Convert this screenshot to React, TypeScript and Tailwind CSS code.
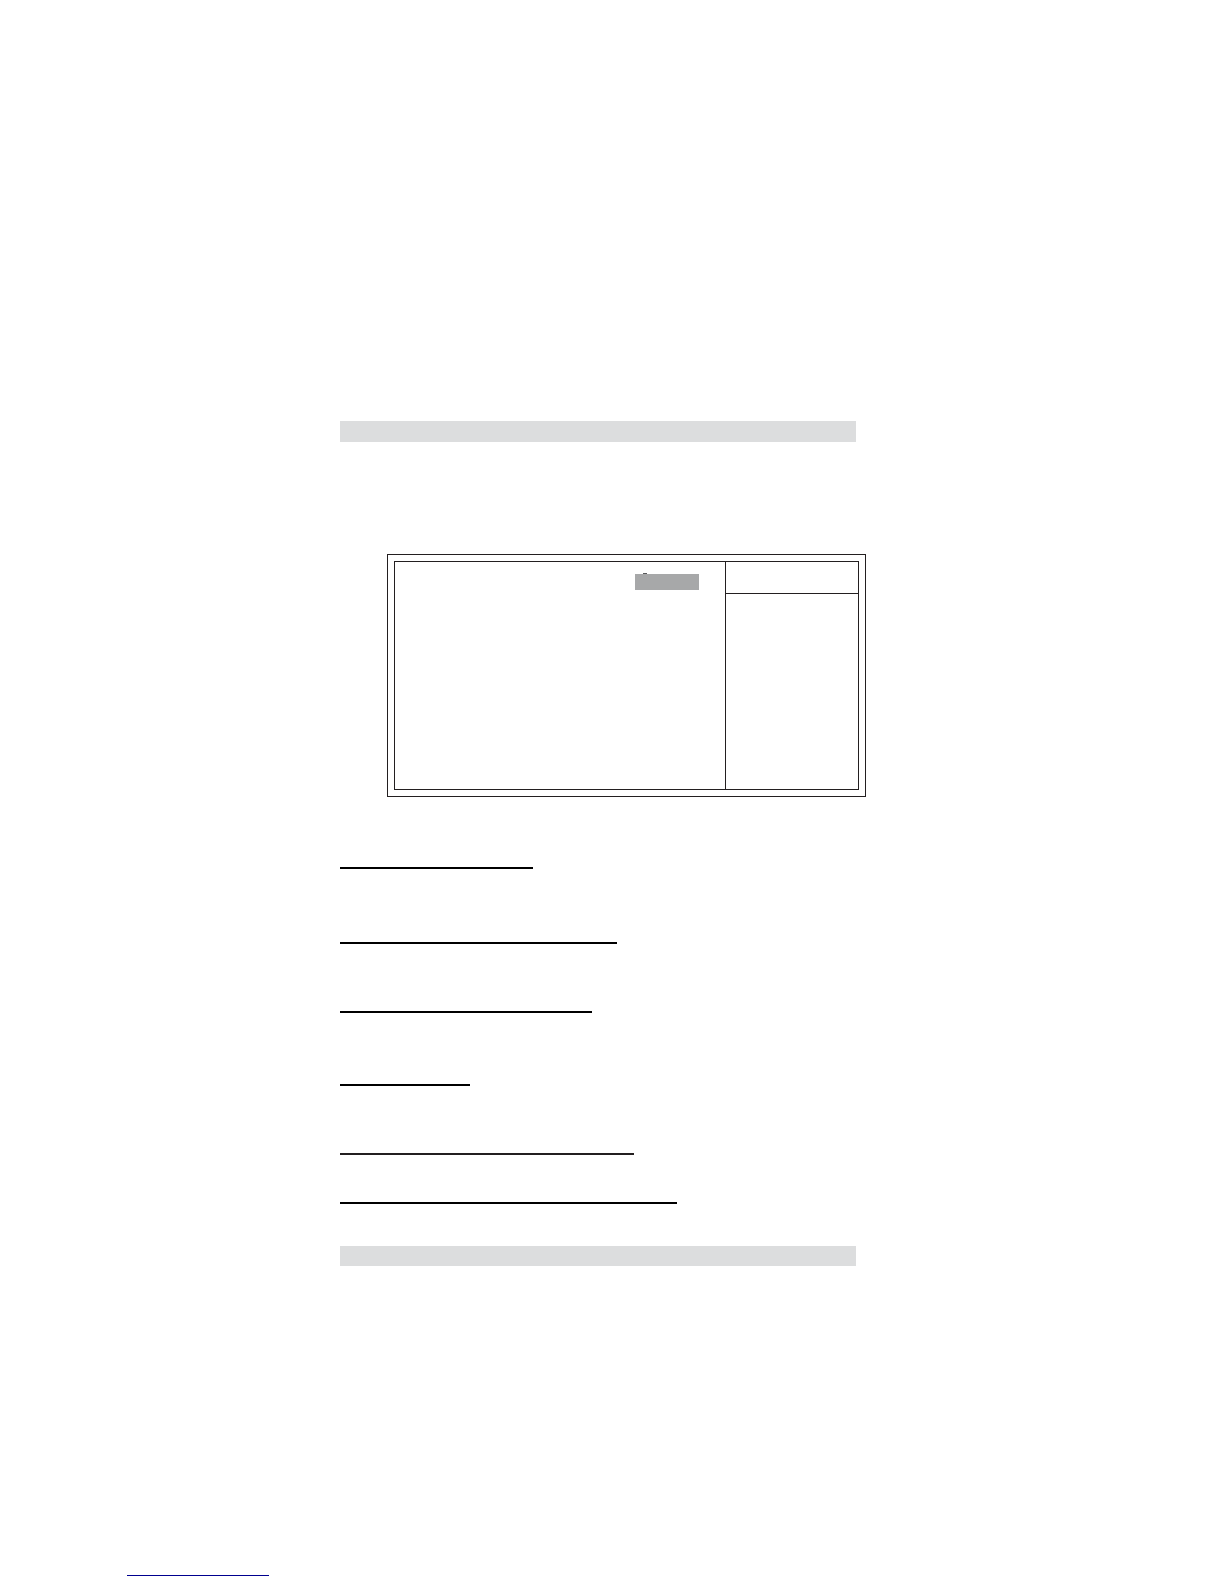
import clsx from 'clsx';

const rules = [
  { width: 'w-[193px]', gap: 'mt-[70px]', color: 'bg-black' },
  { width: 'w-[277px]', gap: 'mt-[73px]', color: 'bg-black' },
  { width: 'w-[252px]', gap: 'mt-[67px]', color: 'bg-black' },
  { width: 'w-[130px]', gap: 'mt-[71px]', color: 'bg-black' },
  { width: 'w-[294px]', gap: 'mt-[67px]', color: 'bg-[#231f20]' },
  { width: 'w-[337px]', gap: 'mt-[47px]', color: 'bg-black' },
];

function SetupScreen() {
  return (
    <section className="mt-28 ml-[47px] border border-[#231f20] p-1.5">
      <div className="flex min-h-[229px] border border-[#231f20]">
        <div className="flex flex-1 items-start justify-end pt-[11px] pr-[26px]">
          <div className="flex w-16 flex-col">
            {/* top of a letter showing above the highlight */}
            <div className="ml-2 h-px w-1 bg-[#58595b]" />
            <div className="h-4 bg-[#a7a8a9]" />
          </div>
        </div>
        <aside className="w-[133px] border-l border-[#231f20]">
          <div className="h-8 border-b border-[#231f20]" />
        </aside>
      </div>
    </section>
  );
}

export default function App() {
  return (
    <div className="flex min-h-screen flex-col bg-white pb-2">
      <main className="pt-[421px] pr-[358px] pl-[340px]">
        <header className="mr-2.5 h-[21px] bg-[#dcddde]" />
        <SetupScreen />
        {rules.map((rule, i) => (
          <hr key={i} className={clsx('h-0.5 border-0', rule.width, rule.gap, rule.color)} />
        ))}
        <footer className="mt-[42px] mr-2.5 h-5 bg-[#dcddde]" />
      </main>
      <hr className="mt-auto ml-[127px] h-px w-[142px] border-0 bg-[#00008f]" />
    </div>
  );
}
